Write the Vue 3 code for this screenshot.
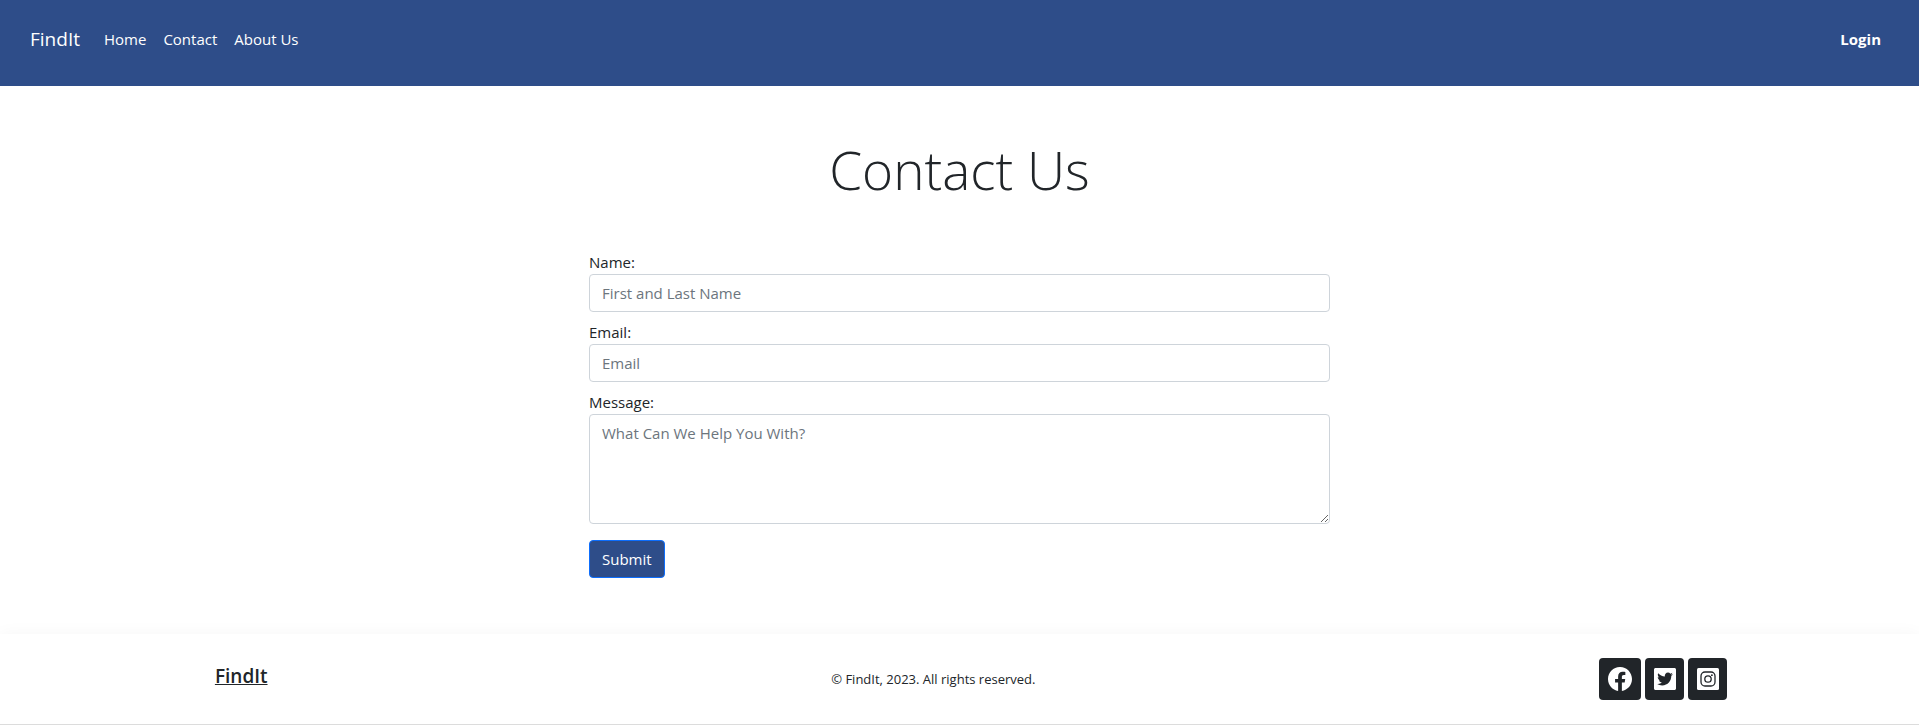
<script setup>
import { ref } from 'vue'

const navLinks = ['Home', 'Contact', 'About Us']
const name = ref('')
const email = ref('')
const message = ref('')
</script>

<template>
  <div class="page">
    <header class="navbar">
      <a class="brand" href="#">FindIt</a>
      <nav class="links">
        <a v-for="link in navLinks" :key="link" href="#">{{ link }}</a>
      </nav>
      <a class="login" href="#">Login</a>
    </header>

    <main class="content">
      <h1>Contact Us</h1>
      <form class="form" @submit.prevent>
        <div class="field">
          <label for="name">Name:</label>
          <input id="name" v-model="name" type="text" placeholder="First and Last Name" />
        </div>
        <div class="field">
          <label for="email">Email:</label>
          <input id="email" v-model="email" type="email" placeholder="Email" />
        </div>
        <div class="field">
          <label for="message">Message:</label>
          <textarea id="message" v-model="message" rows="4" placeholder="What Can We Help You With?"></textarea>
        </div>
        <button class="submit" type="submit">Submit</button>
      </form>
    </main>

    <footer class="footer">
      <a class="footer-brand" href="#">FindIt</a>
      <small>© FindIt, 2023. All rights reserved.</small>
      <div class="social">
        <a class="icon wide" href="#" aria-label="Facebook">
          <svg width="24" height="24" viewBox="0 0 16 16">
            <path fill="#fff" d="M16 8.049c0-4.446-3.582-8.05-8-8.05C3.58 0-.002 3.603-.002 8.05c0 4.017 2.926 7.347 6.75 7.951v-5.625h-2.03V8.05H6.75V6.275c0-2.017 1.195-3.131 3.022-3.131.876 0 1.791.157 1.791.157v1.98h-1.009c-.993 0-1.303.621-1.303 1.258v1.51h2.218l-.354 2.326H9.25V16c3.824-.604 6.75-3.934 6.75-7.951z" />
          </svg>
        </a>
        <a class="icon" href="#" aria-label="Twitter">
          <svg width="22" height="22" viewBox="0 0 448 448">
            <path fill="#fff" d="M416 0H32C14 0 0 14 0 32v384c0 18 14 32 32 32h384c18 0 32-14 32-32V32c0-18-14-32-32-32zm-64.900 158.800c.2 2.800.2 5.700.2 8.500 0 86.700-66 186.600-186.600 186.600-37.200 0-71.700-10.800-100.700-29.400 5.300.6 10.400.8 15.800.8 30.700 0 58.900-10.400 81.400-28-28.800-.6-53-19.500-61.300-45.500 10.100 1.500 19.200 1.500 29.600-1.200-30-6.100-52.500-32.500-52.500-64.400v-.8c8.700 4.900 18.900 7.900 29.600 8.300a65.447 65.447 0 0 1-29.200-54.600c0-12.200 3.200-23.400 8.900-33.100 32.300 39.800 80.800 65.800 135.200 68.600-9.300-44.500 24-80.600 64-80.600 18.900 0 35.900 7.900 47.900 20.700 14.800-2.800 29-8.300 41.600-15.800-4.900 15.200-15.200 28-28.800 36.100 13.200-1.400 26-5.100 37.800-10.200-8.900 13.100-20.100 24.700-32.900 34z" />
          </svg>
        </a>
        <a class="icon" href="#" aria-label="Instagram">
          <svg width="22" height="22" viewBox="0 0 22 22">
            <rect width="22" height="22" rx="1.500" fill="#fff" />
            <g fill="none" stroke="#212529" stroke-width="1.300">
              <rect x="4" y="4" width="14" height="14" rx="4" />
              <circle cx="11" cy="11" r="3.200" />
            </g>
            <circle cx="14.900" cy="7.200" r="0.900" fill="#212529" />
          </svg>
        </a>
      </div>
    </footer>
  </div>
</template>

<style>
body {
  margin: 0;
  background: #fff;
}
</style>

<style scoped>
.page,
.page input,
.page textarea,
.page button {
  font-family: 'Segoe UI', 'Open Sans', 'Noto Sans', sans-serif;
  font-size: 15px;
  line-height: 24px;
  color: #212529;
}
.page *,
.page *::before {
  box-sizing: border-box;
}
.navbar {
  display: flex;
  align-items: center;
  padding: 20px 38px 28px 30px;
  min-height: 86px;
  background: #2e4d89;
}
.navbar a {
  color: #fff;
  text-decoration: none;
}
.navbar .brand {
  font-size: 19px;
  margin-right: 24px;
}
.links {
  display: flex;
  gap: 17px;
  flex: 1;
}
.login {
  font-weight: 700;
}
.content {
  padding: 50px 24px 56px;
}
h1 {
  margin: 0 0 46px;
  font-size: 53px;
  font-weight: 300;
  line-height: 68px;
  text-align: center;
}
.form {
  width: 100%;
  max-width: 741px;
  margin: 0 auto;
}
.field {
  display: flex;
  flex-direction: column;
  margin-bottom: 8px;
}
.field input,
.field textarea {
  width: 100%;
  margin: 0;
  padding: 6px 12px;
  border: 1px solid #ced4da;
  border-radius: 4px;
  background: #fff;
}
.field input {
  height: 38px;
}
.field textarea {
  display: block;
  height: 110px;
  resize: vertical;
}
.field ::placeholder {
  color: #6c757d;
  opacity: 1;
}
.page .submit {
  display: block;
  margin-top: 16px;
  padding: 6px 12px;
  border: 1px solid #0d6efd;
  border-radius: 4px;
  background: #2e4d89;
  color: #fff;
}
.footer {
  display: flex;
  align-items: center;
  justify-content: space-between;
  padding: 24px 10% 24px calc(10% + 23px);
  min-height: 91px;
  background: #fff;
  border-bottom: 1px solid #dcdcdc;
  box-shadow: 0 0 16px rgba(0, 0, 0, 0.04);
}
.footer-brand {
  padding-bottom: 6px;
  font-size: 19px;
  font-weight: 600;
  color: #212529;
}
.footer small {
  font-size: 13px;
}
.social {
  display: flex;
  gap: 4px;
}
.icon {
  display: flex;
  align-items: center;
  justify-content: center;
  width: 39px;
  height: 42px;
  border-radius: 4px;
  background: #212529;
}
.icon.wide {
  width: 42px;
}
</style>
